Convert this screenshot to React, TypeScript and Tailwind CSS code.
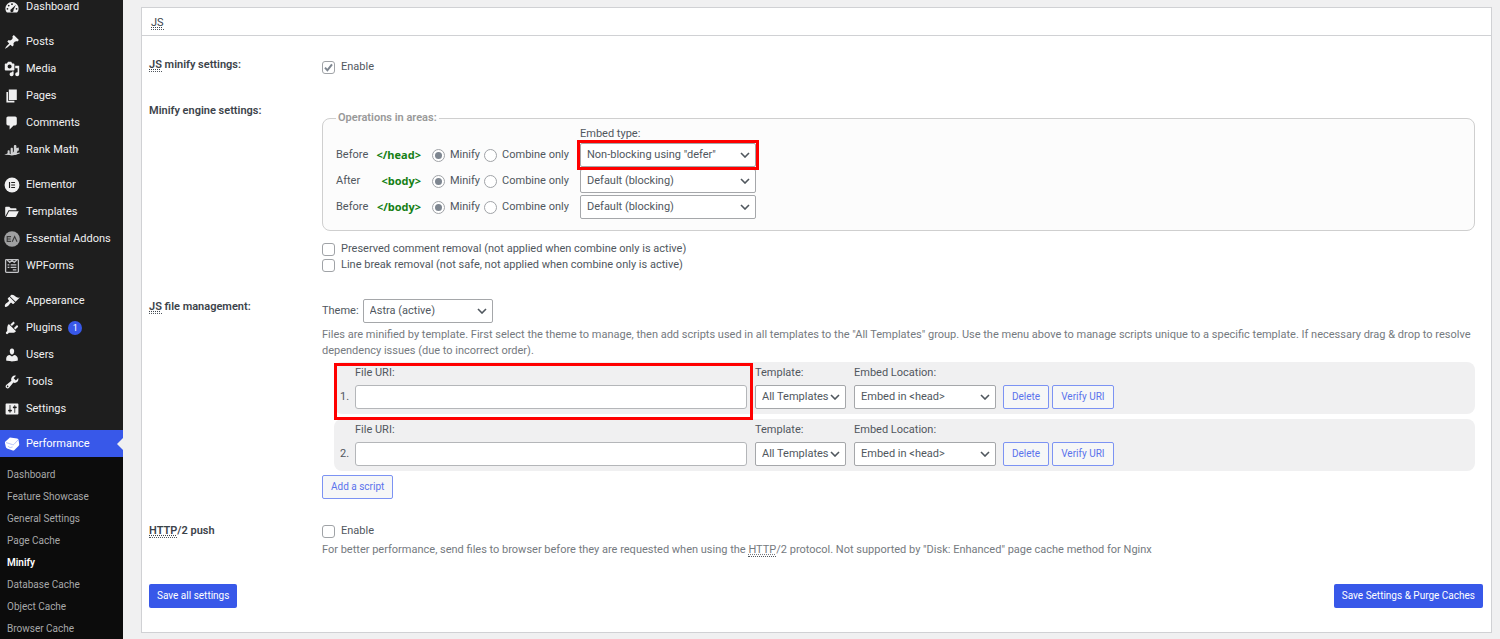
import { useState, type ReactNode } from "react";

const paths = {
  post: "M10.44 3.02l1.82-1.82 6.36 6.35-1.83 1.82c-1.05-.68-2.48-.57-3.41.36l-.75.75c-.92.93-1.04 2.35-.35 3.41l-1.83 1.82-2.41-2.41-2.8 2.79c-.42.42-3.38 2.71-3.8 2.29s1.86-3.39 2.28-3.81l2.79-2.79L4.1 9.36l1.83-1.82c1.05.69 2.48.57 3.4-.36l.75-.75c.93-.92 1.05-2.35.36-3.41z",
  media:
    "M13 11V4c0-.55-.45-1-1-1h-1.67L9 1H5L3.67 3H2c-.55 0-1 .45-1 1v7c0 .55.45 1 1 1h10c.55 0 1-.45 1-1zM7 4.5c1.38 0 2.5 1.12 2.5 2.5S8.38 9.5 7 9.5 4.5 8.38 4.5 7 5.62 4.5 7 4.5zM14 6h5v10.5c0 1.38-1.12 2.5-2.5 2.5S14 17.88 14 16.5s1.12-2.5 2.5-2.5c.17 0 .34.02.5.05V9h-3V6zm-4 8.05V13h2v3.5c0 1.38-1.12 2.5-2.5 2.5S7 17.88 7 16.5 8.12 14 9.5 14c.17 0 .34.02.5.05z",
  page: "M6 15V2h10v13H6zm-1 1h8v2H3V5h2v11z",
  comment: "M5 2h9c1.1 0 2 .9 2 2v7c0 1.1-.9 2-2 2h-2l-5 5v-5H5c-1.1 0-2-.9-2-2V4c0-1.1.9-2 2-2z",
  appearance:
    "M14.48 11.06L7.41 3.99l1.5-1.5c.5-.56 2.3-.47 3.51.32 1.21.8 1.43 1.28 2.91 2.1 1.18.64 2.45 1.26 4.45.85zm-.71.71L6.7 4.7 4.93 6.47c-.39.39-.39 1.02 0 1.41l1.06 1.06c.39.39.39 1.03 0 1.42-.6.6-1.43 1.11-2.21 1.69-.35.26-.7.53-1.01.84C1.43 14.23.4 16.08 1.4 17.07c.99 1 2.84-.03 4.18-1.36.31-.31.58-.66.85-1.02.57-.78 1.08-1.61 1.69-2.21.39-.39 1.02-.39 1.41 0l1.06 1.06c.39.39 1.02.39 1.41 0z",
  plugins:
    "M13.11 4.36L9.87 7.6 8 5.73l3.24-3.24c.35-.34 1.05-.2 1.56.32.52.51.66 1.21.31 1.55zm-8 1.77l.91-1.12 9.01 9.01-1.19.84c-.71.71-2.63 1.16-3.82 1.16H6.14L4.9 17.26c-.59.59-1.54.59-2.12 0-.59-.58-.59-1.53 0-2.12l1.24-1.24v-3.88c0-1.13.4-3.19 1.09-3.89zm7.26 3.97l3.24-3.24c.34-.35 1.04-.21 1.55.31.52.51.66 1.21.31 1.55l-3.24 3.25z",
  users:
    "M10 9.25c-2.27 0-2.73-3.44-2.73-3.44C7 4.02 7.82 2 9.97 2c2.16 0 2.98 2.02 2.71 3.81 0 0-.41 3.44-2.68 3.44zm0 2.57L12.72 10c2.39 0 4.52 2.33 4.52 4.53v2.49s-3.65 1.13-7.24 1.13c-3.65 0-7.24-1.13-7.24-1.13v-2.49c0-2.25 1.94-4.48 4.47-4.48z",
  tools:
    "M16.68 9.77c-1.34 1.34-3.3 1.67-4.95.99l-5.41 6.52c-.99.99-2.59.99-3.58 0s-.99-2.59 0-3.57l6.52-5.42c-.68-1.65-.35-3.61.99-4.95 1.28-1.28 3.12-1.62 4.72-1.06l-2.89 2.89 2.82 2.82 2.86-2.87c.53 1.58.18 3.39-1.08 4.65zM3.81 16.21c.4.39 1.04.39 1.43 0 .4-.4.4-1.04 0-1.43-.39-.4-1.03-.4-1.43 0-.39.39-.39 1.03 0 1.43z",
  settings:
    "M18 16V4c0-.55-.45-1-1-1H3c-.55 0-1 .45-1 1v12c0 .55.45 1 1 1h14c.55 0 1-.45 1-1zM8 11h1c.55 0 1 .45 1 1s-.45 1-1 1H8v1.5c0 .28-.22.5-.5.5s-.5-.22-.5-.5V13H6c-.55 0-1-.45-1-1s.45-1 1-1h1V5.5c0-.28.22-.5.5-.5s.5.22.5.5V11zm5-2h-1c-.55 0-1-.45-1-1s.45-1 1-1h1V5.5c0-.28.22-.5.5-.5s.5.22.5.5V7h1c.55 0 1 .45 1 1s-.45 1-1 1h-1v5.5c0 .28-.22.5-.5.5s-.5-.22-.5-.5V9z",
};

function Glyph({ children }: { children: ReactNode }) {
  return (
    <svg viewBox="0 0 20 20" className="size-4 shrink-0" fill="#f0f0f1" aria-hidden="true">
      {children}
    </svg>
  );
}

const dash = (d: string) => (
  <Glyph>
    <path d={d} />
  </Glyph>
);

const dashboardIcon = (
  <Glyph>
    <path d="M3.76 17h12.48c1.22-1.27 1.98-2.99 1.98-4.88C18.22 7.6 14.54 3.9 10 3.9s-8.22 3.7-8.22 8.22c0 1.89.75 3.61 1.98 4.88z" />
    <g fill="#1e1e1e">
      <circle cx="10" cy="6.5" r="1.1" />
      <circle cx="5.9" cy="8.2" r="1.1" />
      <circle cx="4.3" cy="12.2" r="1.1" />
      <circle cx="15.7" cy="12.2" r="1.1" />
      <path d="M14.9 7.2l-3.1 6.6a2 2 0 1 1-2.6-1.2z" />
    </g>
  </Glyph>
);

const rankMathIcon = (
  <Glyph>
    <g fill="#d0d1d3">
      <path d="M4.5 11.5c0-.8.6-1.3 1.3-1.3s1.3.5 1.3 1.3v4.4H4.5zM8.3 8.5c0-.8.6-1.3 1.4-1.3s1.4.5 1.4 1.3v7.4H8.3zM12.3 5.2c0-.8.7-1.4 1.6-1.4s1.6.6 1.6 1.4v10.7h-3.2z" />
      <path d="M.2 16.4l4.600-2.400 4.600 1.200 5.600-6.600-1.200-.6 4.600-1 .3 4.200-1.200-.9-1.700 3.400 3.900-.6v1.400l-5 1.400-4.900 1-4.500-1z" />
    </g>
  </Glyph>
);

const elementorIcon = (
  <Glyph>
    <circle cx="10" cy="10" r="9.3" />
    <path fill="#1e1e1e" d="M6.2 6.2h1.4v7.6H6.2zM9 6.2h4.8v1.4H9zM9 9.3h4.8v1.4H9zM9 12.4h4.8v1.4H9z" />
  </Glyph>
);

const folderIcon = (
  <Glyph>
    <path d="M1.5 15.7V4.3c0-.5.4-.9.9-.9h4.2l1.8 1.8h6.3c.5 0 .9.4.9.9v1.6H6.3c-.4 0-.8.2-.9.6z" />
    <path d="M2.6 16.2L6 9.7c.2-.4.5-.6.9-.6h11.600l-3.300 6.500c-.2.400-.6.600-1 .6z" />
  </Glyph>
);

const addonsIcon = (
  <Glyph>
    <circle cx="10" cy="10" r="9.8" fill="#9fa0a1" />
    <g fill="none" stroke="#3c3c3c" strokeWidth="1.4">
      <path d="M8.8 7H4v6h4.8M4 10h4.3" />
      <path d="M10.3 13.3l3-6.3 3 6.3" />
    </g>
  </Glyph>
);

const wpformsIcon = (
  <Glyph>
    <g fill="none" stroke="#c3c4c7" strokeWidth="1.6">
      <rect x="2" y="2" width="16" height="16" rx="1" />
      <path d="M4 2.5l3.2 3L10 2.8l2.8 2.7 3.2-3" />
      <path d="M4.5 8.5h2.2M8.3 8.5h7.2M4.5 11.7h2.2M8.3 11.7h7.2M11 14.9h4.5" />
    </g>
  </Glyph>
);

const performanceIcon = (
  <Glyph>
    <path fill="#fff" d="M7.4 1.8L16.4 3.2c1 .2 1.6.8 1.8 1.7l.8 5.4c.1.7-.1 1.3-.6 1.8l-5.3 5.400c-.6.6-1.3.8-2.1.6l-7.2-2.500c-.8-.3-1.300-.9-1.500-1.700L1.200 8.600c-.1-.7.100-1.300.6-1.700z" />
    <path fill="none" stroke="#8fa2f4" strokeWidth=".8" d="M2.500 8.200l8.200 2.600c.9.300 1.300.1 1.800-.4l5.300-5.800M5 12.600c.8 1.200 2 1.800 3.200 1.700l2.600-.6" />
  </Glyph>
);

type Item = { label: string; icon: ReactNode; badge?: number };

const groups: Item[][] = [
  [{ label: "Dashboard", icon: dashboardIcon }],
  [
    { label: "Posts", icon: dash(paths.post) },
    { label: "Media", icon: dash(paths.media) },
    { label: "Pages", icon: dash(paths.page) },
    { label: "Comments", icon: dash(paths.comment) },
    { label: "Rank Math", icon: rankMathIcon },
  ],
  [
    { label: "Elementor", icon: elementorIcon },
    { label: "Templates", icon: folderIcon },
    { label: "Essential Addons", icon: addonsIcon },
    { label: "WPForms", icon: wpformsIcon },
  ],
  [
    { label: "Appearance", icon: dash(paths.appearance) },
    { label: "Plugins", icon: dash(paths.plugins), badge: 1 },
    { label: "Users", icon: dash(paths.users) },
    { label: "Tools", icon: dash(paths.tools) },
    { label: "Settings", icon: dash(paths.settings) },
  ],
];

const subItems = [
  "Dashboard",
  "Feature Showcase",
  "General Settings",
  "Page Cache",
  "Minify",
  "Database Cache",
  "Object Cache",
  "Browser Cache",
];

function Sidebar() {
  return (
    <nav aria-label="Main menu" className="w-[123px] shrink-0 bg-[#1e1e1e] text-[#f0f0f1]">
      <div className="-mt-[7px] flex flex-col gap-2">
        {groups.map((group) => (
          <ul key={group[0].label}>
            {group.map((item) => (
              <li key={item.label}>
                <a href="#" className="flex h-[27px] items-center gap-1.5 pl-1 whitespace-nowrap">
                  {item.icon}
                  <span>{item.label}</span>
                  {item.badge && (
                    <span className="flex size-3.5 items-center justify-center rounded-full bg-[#3858e9] text-[9px] text-white">
                      {item.badge}
                    </span>
                  )}
                </a>
              </li>
            ))}
          </ul>
        ))}
        <div>
          <a href="#" className="relative flex h-[27px] items-center gap-1.5 bg-[#3858e9] pl-1 text-white">
            {performanceIcon}
            <span>Performance</span>
            <span className="absolute top-1/2 right-0 -translate-y-1/2 border-y-6 border-r-6 border-y-transparent border-r-[#f0f0f1]" />
          </a>
          <ul className="bg-[#0c0c0c] pt-[7px] pb-2 text-[10px] text-[#a7a8a9]">
            {subItems.map((label) => (
              <li key={label}>
                <a
                  href="#"
                  className={
                    label === "Minify"
                      ? "flex h-[22px] items-center pl-[7px] font-semibold text-white"
                      : "flex h-[22px] items-center pl-[7px]"
                  }
                >
                  {label}
                </a>
              </li>
            ))}
          </ul>
        </div>
      </div>
    </nav>
  );
}

function Abbr({ title, children }: { title: string; children: ReactNode }) {
  return (
    <abbr title={title} className="border-b border-dotted border-[#50575e] underline decoration-dotted underline-offset-1">
      {children}
    </abbr>
  );
}

function Select({ label, options, className }: { label: string; options: string[]; className: string }) {
  return (
    <span className={`relative inline-flex ${className}`}>
      <select
        aria-label={label}
        className="h-6 w-full appearance-none rounded-[2px] border border-[#a5a7aa] bg-white pl-1.5 text-[#50575e]"
      >
        {options.map((o) => (
          <option key={o}>{o}</option>
        ))}
      </select>
      <svg
        viewBox="0 0 10 6"
        className="pointer-events-none absolute top-[9px] right-1.5 h-1.5 w-2.5"
        fill="none"
        stroke="#50575e"
        strokeWidth="1.6"
        aria-hidden="true"
      >
        <path d="M1 1l4 4 4-4" />
      </svg>
    </span>
  );
}

function Check({ label, checked = false }: { label: string; checked?: boolean }) {
  const [on, setOn] = useState(checked);
  return (
    <label className="flex h-4 items-center gap-1.5">
      <span className="relative flex">
        <input
          type="checkbox"
          checked={on}
          onChange={() => setOn(!on)}
          className="size-[13px] appearance-none rounded-[3px] border border-[#a0a3a7] bg-white"
        />
        {on && (
          <svg viewBox="0 0 13 13" className="pointer-events-none absolute inset-0" fill="none" stroke="#7e8690" strokeWidth="2" aria-hidden="true">
            <path d="M3 6.6l2.4 2.7 4.6-6" />
          </svg>
        )}
      </span>
      {label}
    </label>
  );
}

function Radio({ name, label, checked = false }: { name: string; label: string; checked?: boolean }) {
  return (
    <label className="flex items-center gap-[5px]">
      <input
        type="radio"
        name={name}
        defaultChecked={checked}
        className="flex size-[13px] appearance-none items-center justify-center rounded-full border border-[#a0a3a7] bg-white before:size-[7px] before:rounded-full checked:before:bg-[#7e8690]"
      />
      {label}
    </label>
  );
}

function OutlineButton({ children }: { children: ReactNode }) {
  return (
    <button type="button" className="h-6 rounded-[2px] border border-[#7c93f3] bg-[#f6f7f7] px-2 text-[10px] whitespace-nowrap text-[#5b73ec]">
      {children}
    </button>
  );
}

function PrimaryButton({ children }: { children: ReactNode }) {
  return (
    <button type="button" className="h-6 rounded-[2px] bg-[#3858e9] px-2 text-[10px] whitespace-nowrap text-white">
      {children}
    </button>
  );
}

function Row({ label, children, className }: { label: ReactNode; children: ReactNode; className: string }) {
  return (
    <section className={`flex pr-2 ${className}`}>
      <h3 className="w-[173px] shrink-0 font-semibold text-[#3c434a]">{label}</h3>
      <div className="min-w-0 flex-1">{children}</div>
    </section>
  );
}

const areas = [
  { when: "Before", tag: "</head>", embed: 'Non-blocking using "defer"', marked: true },
  { when: "After", tag: "<body>", embed: "Default (blocking)", marked: false },
  { when: "Before", tag: "</body>", embed: "Default (blocking)", marked: false },
];

function ScriptRow({ n, marked = false }: { n: number; marked?: boolean }) {
  return (
    <li className="relative flex h-[52px] items-end rounded-lg bg-[#f0f0f1] pb-[5px]">
      {marked && (
        <span className="pointer-events-none absolute top-px left-0 z-10 h-[57px] w-[419px] border-3 border-[#ff0000]" />
      )}
      <span className="w-[21px] pl-1.5 leading-6">{n}.</span>
      <label className="flex w-[392px] flex-col gap-1">
        <span className="leading-4">File URI:</span>
        <input type="text" className="h-6 rounded-[3px] border border-[#b4b6b9] bg-white px-1.5" />
      </label>
      <div className="ml-2 flex flex-col gap-1">
        <span className="leading-4">Template:</span>
        <Select label="Template" options={["All Templates"]} className="w-[91px]" />
      </div>
      <div className="ml-2 flex flex-col gap-1">
        <span className="leading-4">Embed Location:</span>
        <Select label="Embed Location" options={["Embed in <head>", "Embed after <body>", "Embed before </body>"]} className="w-[142px]" />
      </div>
      <div className="ml-[7px] flex gap-[3px]">
        <OutlineButton>Delete</OutlineButton>
        <OutlineButton>Verify URI</OutlineButton>
      </div>
    </li>
  );
}

export default function App() {
  return (
    <div className="flex h-screen overflow-hidden bg-[#f0f0f1] font-[Roboto,'Open_Sans',sans-serif] text-[11px] leading-4 text-[#50575e]">
      <Sidebar />
      <main className="min-w-0 flex-1 pt-[7px] pr-2 pl-[18px]">
        <form className="border border-[#d0d1d4] bg-white" onSubmit={(e) => e.preventDefault()}>
          <h2 className="border-b border-[#d0d1d4] pt-[7px] pb-1 pl-[9px] text-[#3c434a]">
            <Abbr title="JavaScript">JS</Abbr>
          </h2>

          <div className="pr-2 pl-[7px]">
            <Row
              className="pt-[21px]"
              label={
                <>
                  <Abbr title="JavaScript">JS</Abbr> minify settings:
                </>
              }
            >
              <div className="pt-0.5">
                <Check label="Enable" checked />
              </div>
            </Row>

            <Row className="pt-7" label="Minify engine settings:">
              <fieldset className="mt-[7px] rounded-lg border border-[#cfcfcf] bg-[#fcfcfc] px-[13px] pb-[11px]">
                <legend className="-mb-px px-0.5 leading-4 font-semibold text-[#999]">Operations in areas:</legend>
                <div className="pt-px pb-px pl-[244px] leading-4">Embed type:</div>
                <div className="flex flex-col gap-0.5">
                  {areas.map((a, i) => (
                    <div key={a.tag} className="flex h-6 items-center whitespace-nowrap">
                      <span className="w-[35px]">{a.when}</span>
                      <span className="w-[50px] text-right font-['Open_Sans',sans-serif] font-bold text-[#148014]">{a.tag}</span>
                      <span className="ml-[11px] flex w-[148px] gap-1">
                        <Radio name={`area-${i}`} label="Minify" checked />
                        <Radio name={`area-${i}`} label="Combine only" />
                      </span>
                      <span className="relative flex">
                        <Select label="Embed type" options={[a.embed, "Non-blocking using async"]} className="w-44" />
                        {a.marked && (
                          <span className="pointer-events-none absolute -inset-[3px] z-10 border-3 border-[#ff0000]" />
                        )}
                      </span>
                    </div>
                  ))}
                </div>
              </fieldset>
              <div className="mt-2.5">
                <Check label="Preserved comment removal (not applied when combine only is active)" />
                <Check label="Line break removal (not safe, not applied when combine only is active)" />
              </div>
            </Row>

            <Row
              className="pt-[26px]"
              label={
                <>
                  <Abbr title="JavaScript">JS</Abbr> file management:
                </>
              }
            >
              <div className="flex items-center gap-1">
                <span>Theme:</span>
                <Select label="Theme" options={["Astra (active)"]} className="w-[130px]" />
              </div>
              <p className="mt-1 text-[#757a80]">
                Files are minified by template. First select the theme to manage, then add scripts used in all templates to the "All
                Templates" group. Use the menu above to manage scripts unique to a specific template. If necessary drag &amp; drop to
                resolve dependency issues (due to incorrect order).
              </p>
              <ol className="mt-[3px] flex flex-col gap-[5px] pl-3">
                <ScriptRow n={1} marked />
                <ScriptRow n={2} />
              </ol>
              <div className="mt-1 flex">
                <OutlineButton>Add a script</OutlineButton>
              </div>
            </Row>

            <Row
              className="pt-6"
              label={
                <>
                  <Abbr title="Hypertext Transfer Protocol">HTTP</Abbr>/2 push
                </>
              }
            >
              <Check label="Enable" />
              <p className="mt-[3px] text-[#757a80]">
                For better performance, send files to browser before they are requested when using the{" "}
                <Abbr title="Hypertext Transfer Protocol">HTTP</Abbr>/2 protocol. Not supported by "Disk: Enhanced" page cache method for
                Nginx
              </p>
            </Row>

            <div className="mt-[26px] mb-6 flex justify-between">
              <PrimaryButton>Save all settings</PrimaryButton>
              <PrimaryButton>Save Settings &amp; Purge Caches</PrimaryButton>
            </div>
          </div>
        </form>
      </main>
    </div>
  );
}
